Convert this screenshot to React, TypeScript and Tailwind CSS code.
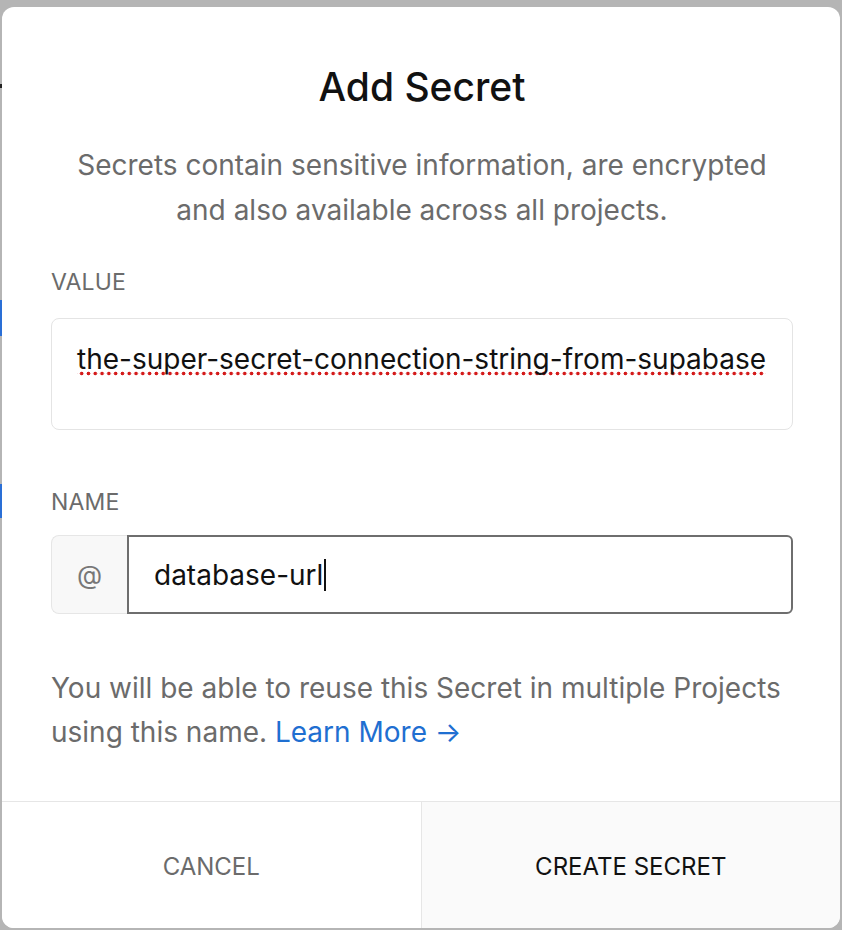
import React from "react";

export default function App() {
  return (
    <div
      className="relative w-[842px] h-[930px] bg-[#b5b5b5] overflow-hidden"
      style={{ fontFamily: "Inter, 'Noto Sans', sans-serif" }}
    >
      <div className="absolute left-0 top-[84px] w-[2px] h-[4px] bg-[#222]" />
      <div className="absolute left-0 top-[300px] w-[2px] h-[36px] bg-[#2a6fd6]" />
      <div className="absolute left-0 top-[484px] w-[2px] h-[34px] bg-[#2a6fd6]" />
      <div className="pt-[7px] pl-[2px] pr-[2px]">
        <div className="w-[838px] h-[921px] bg-white rounded-[12px] overflow-hidden flex flex-col">
          <div className="px-[49px] pr-[47px] flex-1">
            <h1 className="text-center text-[39px] font-medium text-[#111] leading-[48px] mt-[56px]">
              Add Secret
            </h1>
            <p className="text-center text-[28px] text-[#6b6b6b] leading-[45px] mt-[32px]">
              Secrets contain sensitive information, are encrypted
              <br />
              and also available across all projects.
            </p>
            <div className="mt-[34px] text-[23px] text-[#6b6b6b] leading-[30px] tracking-[0.2px]">
              VALUE
            </div>
            <div className="mt-[21px] h-[112px] border border-[#e4e4e4] rounded-[8px] px-[25px] pt-[24px]">
              <span className="text-[28px] text-[#111] leading-[32px] bg-[radial-gradient(circle,#d41a1a_1.7px,transparent_2.1px)] bg-[length:6.8px_5px] bg-repeat-x bg-bottom">
                the-super-secret-connection-string-from-supabase
              </span>
            </div>
            <div className="mt-[57px] text-[23px] text-[#6b6b6b] leading-[30px] tracking-[0.2px]">
              NAME
            </div>
            <div className="mt-[18px] h-[79px] flex">
              <div className="w-[76px] bg-[#f8f8f8] border border-[#e6e6e6] border-r-0 rounded-l-[8px] flex items-center justify-center text-[26px] text-[#777]">
                @
              </div>
              <div className="flex-1 border-2 border-[#6e6e6e] rounded-r-[6px] flex items-center pl-[25px]">
                <span className="text-[28px] text-[#111]">database-url</span>
                <span className="ml-[1px] w-[2px] h-[32px] bg-[#111]" />
              </div>
            </div>
            <p className="mt-[52px] text-[28px] text-[#6b6b6b] leading-[44px]">
              You will be able to reuse this Secret in multiple Projects
              <br />
              using this name. <span className="text-[#1f6fd1]">Learn More →</span>
            </p>
          </div>
          <div className="h-[127px] border-t border-[#e6e6e6] flex">
            <button className="flex-1 flex items-center justify-center pt-[3px] text-[24px] text-[#6b6b6b] bg-white">
              CANCEL
            </button>
            <button className="flex-1 flex items-center justify-center pt-[3px] text-[24px] text-[#111] bg-[#fafafa] border-l border-[#e6e6e6]">
              CREATE SECRET
            </button>
          </div>
        </div>
      </div>
    </div>
  );
}
